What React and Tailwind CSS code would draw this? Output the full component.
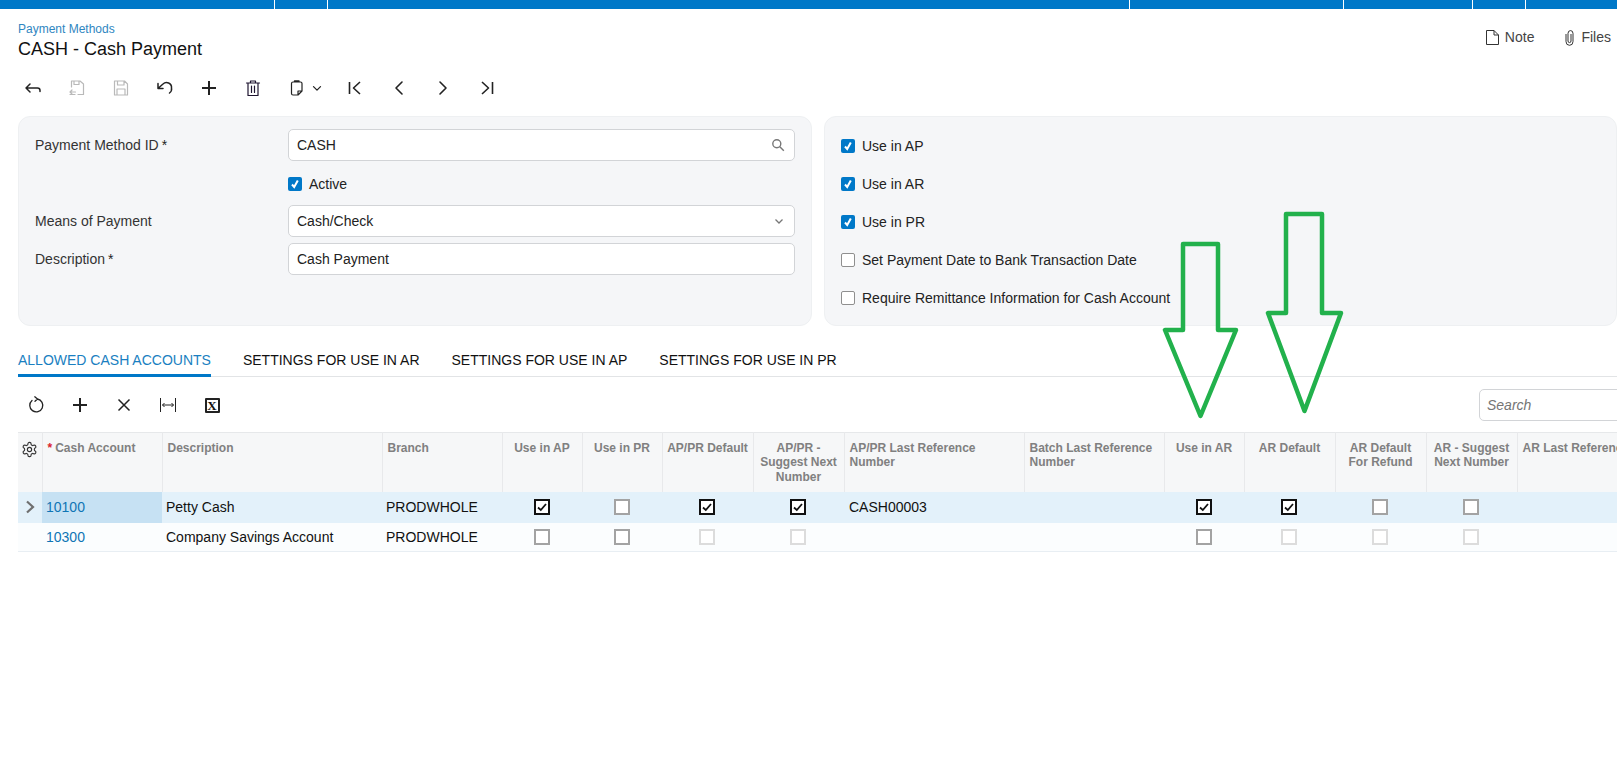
import React from "react";

const FONT = "font-['Liberation_Sans',Arial,sans-serif]";

function Ico({ children, size = 20, className = "", sw = 1.5, color = "currentColor" }) {
  return (
    <svg width={size} height={size} viewBox="0 0 20 20" fill="none" stroke={color} strokeWidth={sw} strokeLinecap="round" strokeLinejoin="round" className={className}>
      {children}
    </svg>
  );
}

function ToolBtn({ children }) {
  return <div className="flex h-[30px] w-[44px] items-center justify-center">{children}</div>;
}

function BlueCheck() {
  return (
    <span className="flex h-[14px] w-[14px] shrink-0 items-center justify-center rounded-[2px] bg-[#0078c8]">
      <svg width="10" height="10" viewBox="0 0 10 10" fill="none" stroke="#fff" strokeWidth="2"><path d="M2 5.5 L4.2 8 L7.8 1.5" /></svg>
    </span>
  );
}
function EmptyCheck() {
  return <span className="h-[14px] w-[14px] shrink-0 rounded-[2px] border border-[#8f8f8f] bg-white" />;
}

function Field({ label, req, children, className = "" }) {
  return (
    <div className={`flex items-center ${className}`}>
      <div className="w-[253px] shrink-0 text-[14px] text-[#333]">
        {label}{req && <span className="ml-[3px] text-[#222]">*</span>}
      </div>
      {children}
    </div>
  );
}

function Input({ value, right }) {
  return (
    <div className="flex h-[32px] w-[507px] items-center justify-between rounded-[5px] border border-[#d2d4d7] bg-white pl-[8px] pr-[9px] text-[14px] text-[#222]">
      <span>{value}</span>
      {right}
    </div>
  );
}

function GridCheck({ kind }) {
  if (kind === "on")
    return (
      <span className="mx-auto flex h-[16px] w-[16px] items-center justify-center border-2 border-[#111] bg-white">
        <svg width="12" height="12" viewBox="0 0 12 12" fill="none" stroke="#111" strokeWidth="1.8"><path d="M2 6.5 L4.8 9 L10 3" /></svg>
      </span>
    );
  if (kind === "off") return <span className="mx-auto block h-[16px] w-[16px] border-2 border-[#a3a3a3] bg-white" />;
  if (kind === "dis") return <span className="mx-auto block h-[16px] w-[16px] border-2 border-[#dcdcdc] bg-white" />;
  return null;
}

const cols = [
  { w: 24, t: "" },
  { w: 120, t: "Cash Account", req: true },
  { w: 220, t: "Description" },
  { w: 120, t: "Branch" },
  { w: 80, t: "Use in AP", c: true },
  { w: 80, t: "Use in PR", c: true },
  { w: 91, t: "AP/PR Default", c: true },
  { w: 91, t: "AP/PR - Suggest Next Number", c: true },
  { w: 180, t: "AP/PR Last Reference Number" },
  { w: 140, t: "Batch Last Reference Number" },
  { w: 80, t: "Use in AR", c: true },
  { w: 91, t: "AR Default", c: true },
  { w: 91, t: "AR Default\nFor Refund", c: true },
  { w: 91, t: "AR - Suggest Next Number", c: true },
  { w: 200, t: "AR Last Reference Number" },
];

const row1 = ["Petty Cash", "PRODWHOLE", "on", "off", "on", "on", "CASH00003", "", "on", "on", "off", "off", ""];
const row2 = ["Company Savings Account", "PRODWHOLE", "off", "off", "dis", "dis", "", "", "off", "dis", "dis", "dis", ""];

function Row({ data, id, selected }) {
  const isCheck = (v) => v === "on" || v === "off" || v === "dis";
  return (
    <tr className={selected ? "h-[31px] bg-[#e3f1fa]" : "h-[29px] border-b border-[#e8eef3] bg-[#fbfdfe]"}>
      <td className="p-0 text-center align-middle">
        {selected && (
          <svg width="24" height="14" viewBox="0 0 24 14" fill="none" stroke="#6f6f6f" strokeWidth="2.2" className="block"><path d="M9 1.5 L15 7 L9 12.5" /></svg>
        )}
      </td>
      <td className={`p-0 pl-[4px] text-[14px] text-[#0f75b5] ${selected ? "bg-[#c6e1f3]" : "pt-[2px]"}`}>{id}</td>
      {data.map((v, i) => (
        <td key={i} className={`overflow-hidden whitespace-nowrap p-0 text-[14px] text-[#111] ${isCheck(v) ? "pr-[1px]" : i === 6 ? "pl-[5px]" : "pl-[4px]"} ${!selected && !isCheck(v) ? "pt-[2px]" : ""}`}>
          {isCheck(v) ? <GridCheck kind={v} /> : v}
        </td>
      ))}
    </tr>
  );
}

export default function App() {
  const tops = [274, 327, 1129, 1343, 1472, 1525];
  const segs = [];
  let prev = 0;
  tops.forEach((t) => { segs.push(t - prev); prev = t + 1; });
  return (
    <div className={`relative h-[782px] w-full overflow-hidden bg-white ${FONT}`}>
      {/* top bar */}
      <div className="flex h-[9px] w-full gap-[1px] bg-white">
        {segs.map((w, i) => (
          <div key={i} className="h-full bg-[#0078c8]" style={{ width: w }} />
        ))}
        <div className="h-full flex-1 bg-[#0078c8]" />
      </div>

      {/* title row */}
      <div className="flex justify-between pl-[18px]">
        <div className="pt-[12px]">
          <div className="text-[12px] leading-[16px] text-[#2f86c1]">Payment Methods</div>
          <div className="mt-[1px] text-[18px] leading-[22px] text-[#111]">CASH - Cash Payment</div>
        </div>
        <div className="flex items-start pr-[6px] pt-[18px] text-[14px] text-[#444]">
          <div className="flex items-center gap-[6px]">
            <svg width="13" height="15" viewBox="0 0 13 15" fill="none" stroke="#333" strokeWidth="1"><path d="M0.5 0.5 H8 L12.5 5 V14.5 H0.5 Z M8 0.5 V5 H12.5" /></svg>
            <span>Note</span>
          </div>
          <div className="ml-[30px] flex items-center gap-[6px]">
            <svg width="11" height="16" viewBox="0 0 11 16" fill="none" stroke="#333" strokeWidth="1"><path d="M2 4 V11.5 A3.5 3.8 0 0 0 9 11.5 V3.5 A2.4 2.8 0 0 0 4 3.5 V11 A1.5 1.6 0 0 0 7 11 V4" /></svg>
            <span>Files</span>
          </div>
        </div>
      </div>

      {/* main toolbar */}
      <div className="mt-[13px] flex h-[30px] items-center pl-[11px] text-[#222]">
        <ToolBtn><Ico><path d="M3 10 H14.5 A2.5 2.5 0 0 1 17 12.5 V13.5 M7 6 L3 10 L7 14" /></Ico></ToolBtn>
        <ToolBtn><Ico color="#b9b9b9" sw={1.2}><path d="M4.5 9 V3 H13 L16.5 6 V16.5 H11 M7 3 V6.5 H12 V3 M3 14 H8.5 M5 12 L3 14 L5 16 M3 16.5 H8" /></Ico></ToolBtn>
        <ToolBtn><Ico color="#b9b9b9" sw={1.2}><path d="M3.5 3 H13.5 L16.5 6 V17 H3.5 Z M6.5 3 V7 H13 V3 M6 17 V11 H14 V17" /></Ico></ToolBtn>
        <ToolBtn><Ico sw={1.5}><path d="M3.5 10 L8 6 A5 5 0 0 1 16.5 10 A5 5 0 0 1 14.5 15 M3 5.5 V10.5 H8" /></Ico></ToolBtn>
        <ToolBtn><Ico sw={2}><path d="M10 3 V17 M3 10 H17" strokeLinecap="butt" /></Ico></ToolBtn>
        <ToolBtn><Ico sw={1.2} color="#1f1430"><path d="M3.5 5 H16.5 M7.5 5 V3 H12.5 V5 M5 5 V17.5 H15 V5 M8.5 8 V14.5 M11.5 8 V14.5" /></Ico></ToolBtn>
        <ToolBtn><Ico sw={1.2}><path d="M7.5 4 H13.5 A1.5 1.5 0 0 1 15 5.5 V13 L11 17 H6 A1.5 1.5 0 0 1 4.5 15.5 V5.5 A1.5 1.5 0 0 1 6 4 H7.5 M7.5 4 V2.8 H12 V4 M15 13 H11 V17" /></Ico></ToolBtn>
        <div className="-ml-[12px] flex w-[26px] items-center pl-[3px]"><Ico size={14} sw={1.8}><path d="M5 8 L10 13 L15 8" /></Ico></div>
        <ToolBtn><Ico sw={1.6}><path d="M4.5 4 V16 M15 4 L8.5 10 L15 16" strokeLinecap="butt" /></Ico></ToolBtn>
        <ToolBtn><Ico sw={1.6}><path d="M13 4 L7 10 L13 16" /></Ico></ToolBtn>
        <ToolBtn><Ico sw={1.6}><path d="M7 4 L13 10 L7 16" /></Ico></ToolBtn>
        <ToolBtn><Ico sw={1.6}><path d="M15.5 4 V16 M5 4 L11.5 10 L5 16" strokeLinecap="butt" /></Ico></ToolBtn>
      </div>

      {/* panels */}
      <div className="mt-[13px] flex gap-[12px] pl-[18px]">
        <div className="h-[210px] w-[794px] shrink-0 rounded-[12px] border border-[#eef0f2] bg-[#f5f6f8] pl-[16px] pt-[12px]">
          <Field label="Payment Method ID" req>
            <Input value="CASH" right={
              <svg width="14" height="14" viewBox="0 0 14 14" fill="none" stroke="#777" strokeWidth="1.4"><circle cx="5.8" cy="5.8" r="4" /><path d="M8.8 8.8 L12.8 12.8" /></svg>
            } />
          </Field>
          <div className="mt-[16px] flex h-[14px] items-center gap-[7px] pl-[253px] text-[14px] text-[#222]">
            <BlueCheck /><span>Active</span>
          </div>
          <Field label="Means of Payment" className="mt-[14px]">
            <Input value="Cash/Check" right={
              <svg width="12" height="12" viewBox="0 0 12 12" fill="none" stroke="#777" strokeWidth="1.3"><path d="M2.5 4.5 L6 8 L9.5 4.5" /></svg>
            } />
          </Field>
          <Field label="Description" req className="mt-[6px]">
            <Input value="Cash Payment" />
          </Field>
        </div>
        <div className="h-[210px] flex-1 rounded-[12px] border border-[#eef0f2] bg-[#f5f6f8] pl-[16px] pt-[22px]">
          {[
            ["Use in AP", true],
            ["Use in AR", true],
            ["Use in PR", true],
            ["Set Payment Date to Bank Transaction Date", false],
            ["Require Remittance Information for Cash Account", false],
          ].map(([t, on]) => (
            <div key={t} className="mb-[24px] flex h-[14px] items-center gap-[7px] text-[14px] text-[#222]">
              {on ? <BlueCheck /> : <EmptyCheck />}
              <span>{t}</span>
            </div>
          ))}
        </div>
      </div>

      {/* tabs */}
      <div className="ml-[18px] mt-[16px] flex h-[35px] items-start border-b border-[#e2e4e6] text-[14px] text-[#111]">
        <div className="h-[35px] border-b-[3px] border-[#0078c8] pt-[8px] text-[#1a7fc1]">ALLOWED CASH ACCOUNTS</div>
        <div className="ml-[32px] pt-[8px]">SETTINGS FOR USE IN AR</div>
        <div className="ml-[32px] pt-[8px]">SETTINGS FOR USE IN AP</div>
        <div className="ml-[32px] pt-[8px]">SETTINGS FOR USE IN PR</div>
      </div>

      {/* grid toolbar */}
      <div className="mt-[12px] flex h-[32px] items-center justify-between pl-[14px] text-[#222]">
        <div className="flex items-center">
          <ToolBtn><Ico sw={1.3}><path d="M6 5.5 A6.5 6.5 0 1 0 11.5 4 M11.5 4 L8.8 1.8 M11.5 4 L9 6.3" /></Ico></ToolBtn>
          <ToolBtn><Ico sw={2}><path d="M10 3 V17 M3 10 H17" strokeLinecap="butt" /></Ico></ToolBtn>
          <ToolBtn><Ico sw={1.5}><path d="M4.5 4.5 L15.5 15.5 M15.5 4.5 L4.5 15.5" strokeLinecap="butt" /></Ico></ToolBtn>
          <ToolBtn><Ico sw={1}><path d="M2.5 3 V17 M17.5 3 V17 M4.5 10 H15.5 M6.5 8 L4.5 10 L6.5 12 M13.5 8 L15.5 10 L13.5 12" strokeLinecap="butt" /></Ico></ToolBtn>
          <ToolBtn>
            <span className="flex h-[15px] w-[15px] items-center justify-center rounded-[1px] border-2 border-[#222] font-['Liberation_Serif',serif] text-[13px] font-bold leading-none text-[#111]">X</span>
          </ToolBtn>
        </div>
        <div className="ml-auto flex h-[32px] w-[200px] shrink-0 translate-x-[62px] items-center rounded-[5px] border border-[#d2d4d7] bg-white pl-[7px] text-[14px] italic text-[#757575]">
          Search
        </div>
      </div>

      {/* grid */}
      <div className="ml-[18px] mt-[11px]">
        <table className="table-fixed border-collapse" style={{ width: cols.reduce((a, c) => a + c.w, 0) }}>
          <colgroup>
            {cols.map((c, i) => <col key={i} style={{ width: c.w }} />)}
          </colgroup>
          <thead>
            <tr className="h-[59px] border-t border-[#e6e8ea] bg-[#f6f7f8]">
              {cols.map((c, i) => (
                <th key={i} className={`whitespace-pre-line border-r border-[#e8e9eb] p-0 pt-[8px] align-top text-[12px] font-bold leading-[14.4px] text-[#808080] ${c.c ? "px-[2px] text-center" : i === 0 ? "px-[4px] text-left" : "pl-[5px] pr-[4px] text-left"}`}>
                  {i === 0 ? (
                    <svg width="17" height="17" viewBox="0 0 24 24" fill="none" stroke="#333" strokeWidth="1.6" className="-mx-[1px] block">
                      <path d="M12.22 2h-.44a2 2 0 0 0-2 2v.18a2 2 0 0 1-1 1.73l-.43.25a2 2 0 0 1-2 0l-.15-.08a2 2 0 0 0-2.73.73l-.22.38a2 2 0 0 0 .73 2.73l.15.1a2 2 0 0 1 1 1.72v.51a2 2 0 0 1-1 1.74l-.15.09a2 2 0 0 0-.73 2.73l.22.38a2 2 0 0 0 2.73.73l.15-.08a2 2 0 0 1 2 0l.43.25a2 2 0 0 1 1 1.73V20a2 2 0 0 0 2 2h.44a2 2 0 0 0 2-2v-.18a2 2 0 0 1 1-1.73l.43-.25a2 2 0 0 1 2 0l.15.08a2 2 0 0 0 2.73-.73l.22-.39a2 2 0 0 0-.73-2.73l-.15-.08a2 2 0 0 1-1-1.74v-.5a2 2 0 0 1 1-1.74l.15-.09a2 2 0 0 0 .73-2.73l-.22-.38a2 2 0 0 0-2.73-.73l-.15.08a2 2 0 0 1-2 0l-.43-.25a2 2 0 0 1-1-1.73V4a2 2 0 0 0-2-2z" />
                      <circle cx="12" cy="12" r="3" />
                    </svg>
                  ) : (
                    <>
                      {c.req && <span className="mr-[3px] text-[#d9232e]">*</span>}
                      {c.t}
                    </>
                  )}
                </th>
              ))}
            </tr>
          </thead>
          <tbody>
            <Row id="10100" data={row1} selected />
            <Row id="10300" data={row2} />
          </tbody>
        </table>
      </div>

      {/* green annotation arrows */}
      <svg className="pointer-events-none absolute left-0 top-0" width="1617" height="782" fill="none" stroke="#22b14c" strokeWidth="4.5" strokeLinejoin="round">
        <path d="M1183 244 H1218 V330 H1236 L1200.5 416 L1165 330 H1183 Z" />
        <path d="M1286 214 H1322 V313 H1341 L1304.5 411 L1268 313 H1286 Z" />
      </svg>
    </div>
  );
}
